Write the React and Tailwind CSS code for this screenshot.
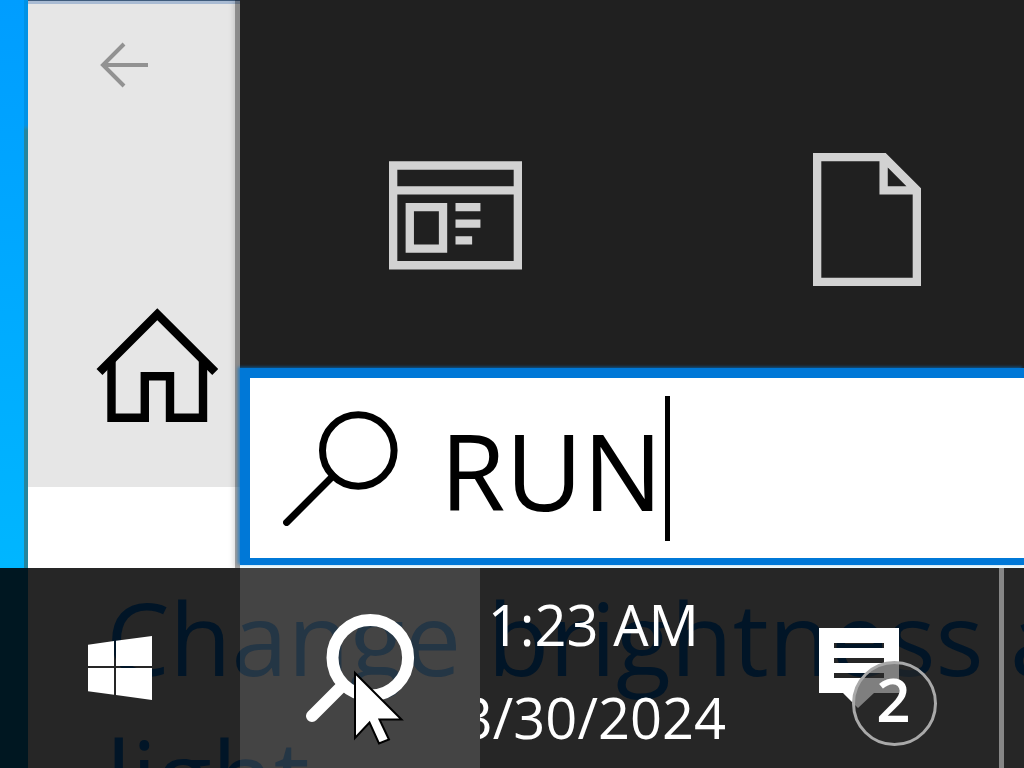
import React, { useState } from "react";

const BackIcon = () => (
  <svg width="50" height="46" viewBox="0 0 50 46" fill="none" stroke="#929292" strokeWidth="4">
    <path d="M24 2 L3 23 L24 44 M3 23 H48" />
  </svg>
);

const HomeIcon = () => (
  <svg width="122" height="116" viewBox="96 308 122 116" fill="none" stroke="#000" strokeWidth="8.4">
    <path d="M99.5 372 L157.3 314.3 L215.2 372" />
    <path d="M111.5 360 V417.7 H144.8 V376.2 H170 V417.7 H203 V360" />
  </svg>
);

const NewsIcon = () => (
  <svg width="133" height="133" viewBox="0 0 16 16" fill="#d2d2d2">
    <path
      fillRule="evenodd"
      d="M0 1 H16 V14 H0 Z M1 2 V4 H15 V2 Z M1 5 V13 H15 V5 Z"
    />
    <path fillRule="evenodd" d="M2 6 H7 V12 H2 Z M3 7 V11 H6 V7 Z" />
    <path d="M8 6 H11 V7 H8 Z M8 8 H11 V9 H8 Z M8 10 H10 V11 H8 Z" />
  </svg>
);

const DocumentIcon = () => (
  <svg width="108" height="133" viewBox="0 0 13 16" fill="#d2d2d2">
    <path
      fillRule="evenodd"
      d="M0 0 H8.75 L13 4.25 V16 H0 Z M1 1 V15 H12 V5 H8 V1 Z M9 1.75 V4 H11.25 Z"
    />
  </svg>
);

const SearchIcon = () => (
  <svg width="116" height="116" viewBox="283 410 116 116" fill="none" stroke="#000" strokeWidth="7">
    <circle cx="358.3" cy="450.5" r="35.8" />
    <path d="M333 476 L286.6 522.5" strokeLinecap="round" />
  </svg>
);

const TaskbarSearchIcon = () => (
  <svg width="110" height="110" viewBox="305 613 110 110" fill="none" stroke="#fff" strokeWidth="12">
    <circle cx="370.3" cy="657.7" r="37.8" />
    <path d="M343 685 L312 716" strokeLinecap="round" />
  </svg>
);

const WindowsLogo = () => (
  <svg width="64" height="64" viewBox="88 636 64 64" fill="#fff">
    <path d="M88 644.7 L114 641 V666 H88 Z" />
    <path d="M116 640.7 L152 636 V666 H116 Z" />
    <path d="M88 668 H114 V694.8 L88 691.3 Z" />
    <path d="M116 668 H152 V700 L116 695.1 Z" />
  </svg>
);

const MessageIcon = () => (
  <svg width="80" height="80" viewBox="0 0 80 80">
    <path
      fill="#fff"
      fillRule="evenodd"
      d="M0 0 H80 V65 H55 L39 80 L24 65 H0 Z M15 15 V20 H65 V15 Z M15 30 V35 H65 V30 Z M15 45 V50 H65 V45 Z"
    />
  </svg>
);

const Cursor = () => (
  <svg
    className="absolute left-[113px] top-[102px]"
    width="52"
    height="78"
    viewBox="353 670 52 78"
    fill="#fff"
    stroke="#000"
    strokeWidth="2"
  >
    <path d="M355 673 V738 L369.5 722.5 L379 743.5 L389 739.5 L379.5 719.5 H401.5 Z" />
  </svg>
);

const SidePanel = () => (
  <div className="flex w-[212px] shrink-0 flex-col border-t border-[#3f5b7c] bg-white">
    <div className="flex flex-1 flex-col items-start border-t-[3px] border-[#a9bbd3] bg-[#e6e6e6] pl-[68px] pt-[38px]">
      <button aria-label="Back" className="ml-1">
        <BackIcon />
      </button>
      <a href="#home" aria-label="Home" className="mt-[220px]">
        <HomeIcon />
      </a>
    </div>
    <div className="h-[81px]"></div>
  </div>
);

const SearchBox = () => {
  const [query, setQuery] = useState("RUN");

  return (
    <div className="bg-[#f0fbfb] pb-[3px]">
      <label className="flex h-[197px] items-center border-b-[7px] border-l-[10px] border-t-[10px] border-[#0078d7] bg-white pl-[33px] shadow-[-2px_-1px_3px_#0078d7aa]">
        <SearchIcon />
        <input
          type="text"
          aria-label="Search"
          value={query}
          onChange={(e) => setQuery(e.target.value)}
          className="ml-[41px] h-[145px] w-[225px] pt-1 text-[106px] text-black caret-transparent outline-none"
        />
        <span className="h-[145px] w-[5px] bg-black"></span>
      </label>
    </div>
  );
};

const Taskbar = () => (
  <div className="relative flex h-[200px] shrink-0 overflow-hidden bg-[#262626] text-white">
    {/* Window text showing through the taskbar */}
    <div className="absolute inset-0 overflow-hidden border-l-[28px] border-[#001721] pl-[78px]">
      <p className="whitespace-nowrap text-[101px] leading-[138px] text-[#011527]">
        Change brightness a
        <br />
        light
      </p>
    </div>

    <button aria-label="Start" className="relative flex w-60 shrink-0 items-center justify-center">
      <WindowsLogo />
    </button>
    <button
      aria-label="Search"
      className="relative flex w-60 shrink-0 items-center justify-center bg-[#ffffff24]"
    >
      <TaskbarSearchIcon />
      <Cursor />
    </button>
    <button className="relative flex w-[246px] shrink-0 justify-end overflow-hidden pt-[10px] text-[56px] leading-[93px]">
      <span className="shrink-0 whitespace-nowrap text-center">
        1:23 AM
        <br />
        3/30/2024
      </span>
    </button>
    <div className="relative flex flex-1 items-start pl-[93px] pt-[60px]">
      <button aria-label="Notifications" className="relative">
        <MessageIcon />
        <span className="absolute left-[33px] top-[33px] flex size-[85px] items-center justify-center rounded-full border-[3px] border-[#a9a9a9] bg-[#2a2a2a99] pb-[10px] pr-[2px] text-[60px] font-semibold leading-none">
          2
        </span>
      </button>
    </div>
    <button
      aria-label="Show desktop"
      className="relative w-[25px] shrink-0 border-l-[5px] border-[#868686]"
    ></button>
  </div>
);

const App = () => {
  return (
    <div className="flex min-h-screen flex-col overflow-hidden bg-white font-['Open_Sans','Noto_Sans',sans-serif]">
      <div className="flex flex-1">
        <div className="flex w-7 shrink-0 bg-linear-to-b from-[#009dff] to-[#00b6ff]">
          <div className="ml-auto w-1 bg-linear-to-b from-[#0092e6] from-22% to-[#25859d] to-23%"></div>
        </div>
        <SidePanel />
        <div className="flex min-w-0 flex-1 flex-col shadow-[-5px_0_0_#00000050,-7px_0_5px_#00000020]">
          <div className="flex flex-1 items-start gap-[291px] overflow-hidden bg-[#202020] pl-[149px] pt-[153px]">
            <a href="#news" aria-label="News" className="shrink-0">
              <NewsIcon />
            </a>
            <a href="#documents" aria-label="Documents" className="shrink-0">
              <DocumentIcon />
            </a>
          </div>
          <SearchBox />
        </div>
      </div>
      <Taskbar />
    </div>
  );
};

export default App;
